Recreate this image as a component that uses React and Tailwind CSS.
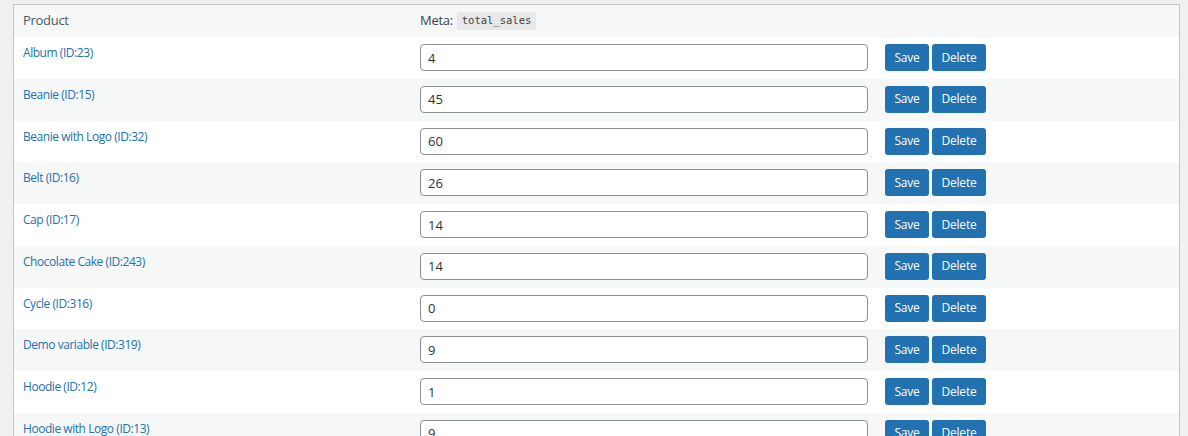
import React from "react";

const rows = [
  { name: "Album", id: 23, value: "4" },
  { name: "Beanie", id: 15, value: "45" },
  { name: "Beanie with Logo", id: 32, value: "60" },
  { name: "Belt", id: 16, value: "26" },
  { name: "Cap", id: 17, value: "14" },
  { name: "Chocolate Cake", id: 243, value: "14" },
  { name: "Cycle", id: 316, value: "0" },
  { name: "Demo variable", id: 319, value: "9" },
  { name: "Hoodie", id: 12, value: "1" },
  { name: "Hoodie with Logo", id: 13, value: "9" },
];

export default function App() {
  return (
    <div className="h-[436px] overflow-hidden bg-[#f0f0f1] pl-[13px] pr-[8px] pt-[4px] font-['Open_Sans','Noto_Sans',sans-serif] text-[13px] text-[#3c434a]">
      <div className="border border-b-0 border-[#c3c4c7] bg-white">
        {/* header */}
        <div className="grid h-[32px] grid-cols-[397px_465px_1fr] items-center bg-[#f6f7f7]">
          <div className="pl-[9px] tracking-[-0.3px] text-[#50575e]">Product</div>
          <div className="flex items-center gap-[4px] pl-[9px] tracking-[-0.3px] text-[#3c434a]">
            <span>Meta:</span>
            <code className="flex h-[18px] items-center bg-[#e8e8e9] px-[5px] font-['DejaVu_Sans_Mono','Liberation_Mono',monospace] text-[10.5px] tracking-normal text-[#3c434a]">
              total_sales
            </code>
          </div>
          <div />
        </div>
        {rows.map((r, i) => (
          <div
            key={r.id}
            className={`grid h-[41.75px] grid-cols-[397px_465px_1fr] items-start ${
              i % 2 === 1 ? "bg-[#f6f7f7]" : "bg-white"
            }`}
          >
            <a className="cursor-pointer pl-[9px] pt-[7px] text-[12px] tracking-[-0.45px] text-[#2271b1]">
              {r.name} (ID:{r.id})
            </a>
            <div className="pl-[9px] pt-[7px]">
              <input
                type="text"
                defaultValue={r.value}
                className="h-[27px] w-[448px] rounded-[4px] border border-[#8c8f94] bg-white px-[7px] text-[13px] text-[#2c3338] outline-none"
              />
            </div>
            <div className="flex gap-[3px] pl-[9px] pt-[7px]">
              <button className="h-[27px] w-[44px] rounded-[3px] bg-[#2271b1] text-[12px] tracking-[-0.2px] text-white">
                Save
              </button>
              <button className="h-[27px] w-[54px] rounded-[3px] bg-[#2271b1] text-[12px] tracking-[-0.2px] text-white">
                Delete
              </button>
            </div>
          </div>
        ))}
      </div>
    </div>
  );
}
